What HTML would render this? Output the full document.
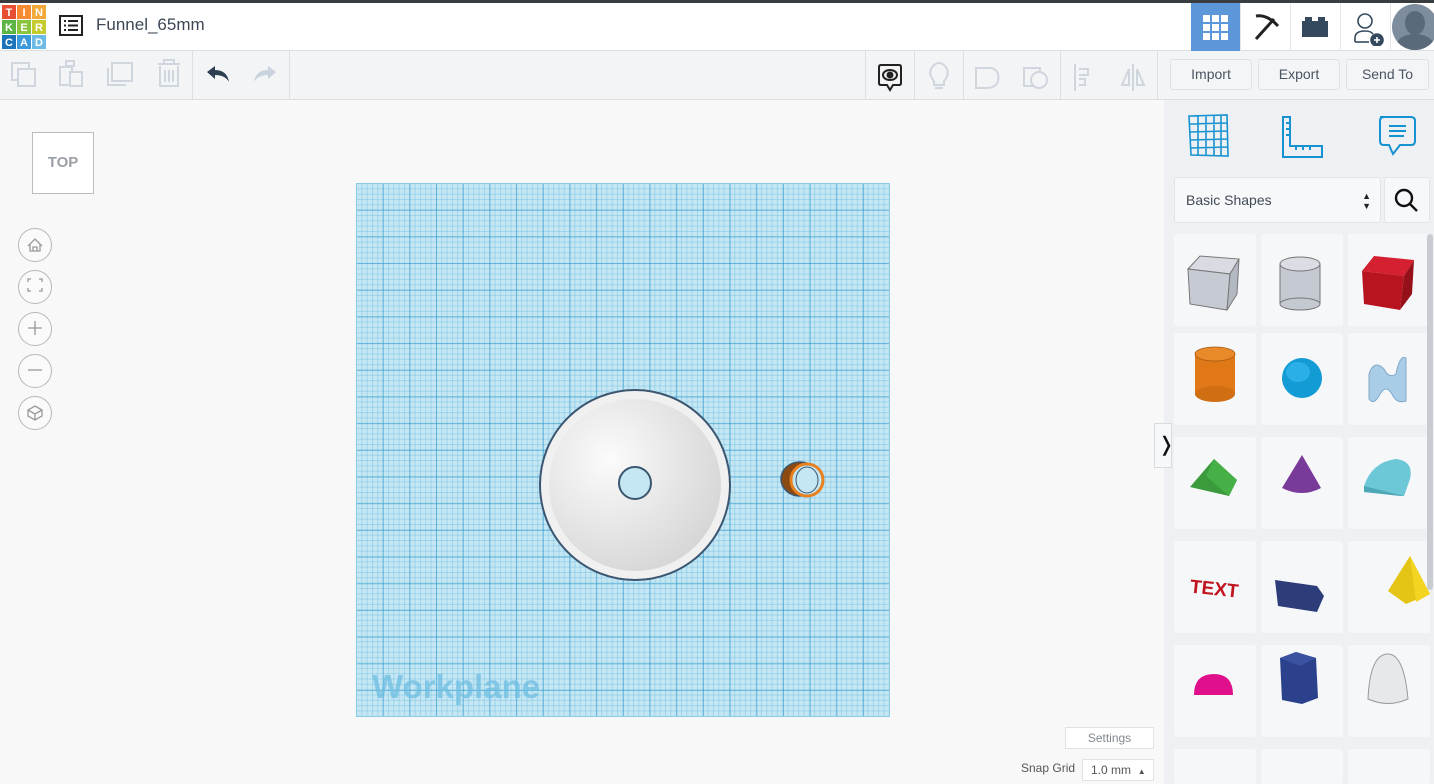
<!DOCTYPE html>
<html style="overflow:hidden;height:784px"><head><meta charset="utf-8"><style>
*{box-sizing:border-box;margin:0;padding:0}
body{width:1434px;height:784px;overflow:hidden;background:#f8f8f8;font-family:"Liberation Sans",sans-serif;position:relative}
.a{position:absolute}
.card{position:absolute;width:82px;height:92px;background:#f6f7f9;border-radius:3px}
.btn{position:absolute;height:31px;top:59px;border:1px solid #dfe1e5;border-radius:3px;background:#f4f5f7;color:#4a5562;font-size:14px;text-align:center;line-height:29px}
.nav{position:absolute;left:18px;width:34px;height:34px;border:1px solid #b5b8bc;border-radius:50%;background:#fafafa}
.sep{position:absolute;top:51px;width:1px;height:48px;background:#dde0e3}
</style></head><body>
<div class="a" style="left:0;top:0;width:1434px;height:3px;background:#3a3d40"></div>
<div class="a" style="left:0;top:3px;width:1434px;height:48px;background:#fff;border-bottom:1px solid #dcdfe2"></div>
<svg class="a" style="left:2px;top:5px" width="44" height="44" viewBox="0 0 44 44" font-family="Liberation Sans" font-weight="bold" font-size="11" fill="#fff" text-anchor="middle">
<rect x="0" y="0" width="14" height="14" fill="#e84e32"/><rect x="15" y="0" width="14" height="14" fill="#f58a32"/><rect x="30" y="0" width="14" height="14" fill="#f2a93a"/>
<rect x="0" y="15" width="14" height="14" fill="#5bb443"/><rect x="15" y="15" width="14" height="14" fill="#8ac43f"/><rect x="30" y="15" width="14" height="14" fill="#c4cc2e"/>
<rect x="0" y="30" width="14" height="14" fill="#1b74bb"/><rect x="15" y="30" width="14" height="14" fill="#3a9ad9"/><rect x="30" y="30" width="14" height="14" fill="#6cbbe6"/>
<text x="7" y="11">T</text><text x="22" y="11">I</text><text x="37" y="11">N</text><text x="7" y="26">K</text><text x="22" y="26">E</text><text x="37" y="26">R</text><text x="7" y="41">C</text><text x="22" y="41">A</text><text x="37" y="41">D</text>
</svg>
<svg class="a" style="left:59px;top:15px" width="24" height="21" viewBox="0 0 24 21"><rect x="1" y="1" width="22" height="19" fill="none" stroke="#222" stroke-width="2"/><g fill="#222"><rect x="5" y="5" width="2" height="2"/><rect x="9" y="5" width="10" height="2"/><rect x="5" y="9.5" width="2" height="2"/><rect x="9" y="9.5" width="10" height="2"/><rect x="5" y="14" width="2" height="2"/><rect x="9" y="14" width="10" height="2"/></g></svg>
<div class="a" style="left:96px;top:15px;font-size:17px;color:#3b4754">Funnel_65mm</div>
<div class="a" style="left:1191px;top:3px;width:49px;height:48px;background:#5b97d9"></div>
<svg class="a" style="left:1203px;top:15px" width="25" height="25"><g fill="#fff"><rect x="0" y="0" width="7" height="7"/><rect x="9" y="0" width="7" height="7"/><rect x="18" y="0" width="7" height="7"/><rect x="0" y="9" width="7" height="7"/><rect x="9" y="9" width="7" height="7"/><rect x="18" y="9" width="7" height="7"/><rect x="0" y="18" width="7" height="7"/><rect x="9" y="18" width="7" height="7"/><rect x="18" y="18" width="7" height="7"/></g></svg>
<div class="a" style="left:1240px;top:3px;width:1px;height:48px;background:#e4e6e8"></div>
<svg class="a" style="left:1251px;top:12px" width="30" height="30" viewBox="0 0 30 30" fill="none" stroke="#222" stroke-width="3"><path d="M5 4 Q16 2 27 14"/><path d="M23 7 L5 27"/></svg>
<div class="a" style="left:1290px;top:3px;width:1px;height:48px;background:#e4e6e8"></div>
<svg class="a" style="left:1302px;top:16px" width="26" height="22"><rect x="0" y="5" width="26" height="16" fill="#34495e"/><rect x="3" y="1" width="7" height="5" fill="#34495e"/><rect x="16" y="1" width="7" height="5" fill="#34495e"/></svg>
<div class="a" style="left:1340px;top:3px;width:1px;height:48px;background:#e4e6e8"></div>
<svg class="a" style="left:1354px;top:12px" width="32" height="34" viewBox="0 0 32 34" fill="none" stroke="#34495e" stroke-width="1.6"><circle cx="11" cy="9" r="7"/><path d="M1 30 V26 Q1 19 11 19 Q17 19 19 22"/><path d="M1 30 H15"/><circle cx="23" cy="28" r="6" fill="#34495e"/><path d="M23 25 V31 M20 28 H26" stroke="#fff"/></svg>
<div class="a" style="left:1390px;top:3px;width:1px;height:48px;background:#e4e6e8"></div>
<div class="a" style="left:1392px;top:4px;width:42px;height:46px;overflow:hidden"><div class="a" style="left:0;top:0;width:46px;height:46px;border-radius:50%;background:#7d8d9d;overflow:hidden"><div class="a" style="left:13px;top:7px;width:20px;height:24px;border-radius:50%;background:#5a6a7b"></div><div class="a" style="left:4px;top:30px;width:38px;height:24px;border-radius:50%;background:#5a6a7b"></div></div></div>
<div class="a" style="left:0;top:51px;width:1434px;height:49px;background:#f3f4f6;border-bottom:1px solid #dcdfe2"></div>
<svg class="a" style="left:0;top:51px" width="300" height="48" fill="none" stroke="#cfd6dd" stroke-width="2">
<rect x="12" y="12" width="17" height="17"/><rect x="18" y="18" width="17" height="17" fill="#f3f4f6"/>
<rect x="60" y="16" width="12" height="18"/><rect x="66" y="10" width="8" height="5"/><rect x="70" y="21" width="12" height="14" fill="#f3f4f6"/>
<rect x="112" y="12" width="20" height="18"/><path d="M108 17 V34 H126"/>
<path d="M158 13 H180 M164 13 V9 H174 V13 M160 15 V35 H178 V15 M165 19 V31 M169 19 V31 M173 19 V31"/>
</svg>
<div class="sep" style="left:192px"></div>
<svg class="a" style="left:205px;top:64px" width="26" height="20"><path d="M2 8 L10 2 V6 Q22 6 24 18 Q20 11 10 11 V15 Z" fill="#2c3e50"/></svg>
<svg class="a" style="left:252px;top:64px" width="26" height="20"><path d="M24 8 L16 2 V6 Q4 6 2 18 Q6 11 16 11 V15 Z" fill="#c8d3de"/></svg>
<div class="sep" style="left:289px"></div>
<div class="sep" style="left:865px"></div>
<svg class="a" style="left:877px;top:63px" width="26" height="30" viewBox="0 0 26 30" fill="none" stroke="#222" stroke-width="2"><path d="M4 2 H22 Q24 2 24 4 V20 Q24 22 22 22 H16 L13 27 L10 22 H4 Q2 22 2 20 V4 Q2 2 4 2Z"/><ellipse cx="13" cy="12" rx="7" ry="5"/><circle cx="13" cy="12" r="2.5" fill="#222"/></svg>
<div class="sep" style="left:914px"></div>
<svg class="a" style="left:926px;top:61px" width="230" height="32" fill="none" stroke="#cfd6dd" stroke-width="2">
<path d="M8 20 Q1 12 7 5 Q13 -1 19 5 Q25 12 18 20 V24 H8Z M9 27 H17"/>
<path d="M50 7 H66 Q74 10 72 20 Q70 27 60 27 H50Z"/>
<rect x="98" y="7" width="16" height="18"/><circle cx="113" cy="19" r="8" fill="#f3f4f6"/>
<path d="M149 3 V30 M153 8 H162 V14 H153 M153 18 H159 V24 H153"/>
<path d="M207 3 V30 M203 8 L196 24 H203Z M211 8 L218 24 H211Z"/>
</svg>
<div class="sep" style="left:963px"></div><div class="sep" style="left:1060px"></div><div class="sep" style="left:1157px"></div>
<div class="btn" style="left:1170px;width:82px">Import</div>
<div class="btn" style="left:1258px;width:82px">Export</div>
<div class="btn" style="left:1346px;width:83px">Send To</div>
<div class="a" style="left:32px;top:132px;width:62px;height:62px;border:1px solid #b9bcc0;background:#fff;color:#9aa0a6;font-size:15px;font-weight:bold;text-align:center;line-height:60px">TOP</div>
<div class="nav" style="top:228px"></div><div class="nav" style="top:270px"></div><div class="nav" style="top:312px"></div><div class="nav" style="top:354px"></div><div class="nav" style="top:396px"></div>
<svg class="a" style="left:18px;top:228px" width="34" height="204" fill="none" stroke="#999" stroke-width="1.3">
<path d="M10 18 L17 11 L24 18 M12 16 V23 H22 V16 M15 23 V19 H19 V23"/>
<path d="M10 54 V51 H13 M21 51 H24 V54 M24 60 V63 H21 M13 63 H10 V60"/>
<path d="M17 93 V107 M10 100 H24"/>
<path d="M10 142 H24"/>
<path d="M17 178 L24 182 V188 L17 192 L10 188 V182Z M10 182 L17 186 L24 182 M17 186 V192"/>
</svg>
<div class="a" style="left:356px;top:183px;width:534px;height:534px;background-color:#c5e6f3;border:1px solid #8ccbe4;
background-image:linear-gradient(90deg,rgba(40,150,200,.55) 1px,transparent 1px),linear-gradient(rgba(40,150,200,.55) 1px,transparent 1px),linear-gradient(90deg,rgba(90,180,220,.35) 1px,transparent 1px),linear-gradient(rgba(90,180,220,.35) 1px,transparent 1px);
background-size:26.7px 26.7px,26.7px 26.7px,5.34px 5.34px,5.34px 5.34px;background-position:-1px -1px"></div>
<div class="a" style="left:372px;top:668px;font-size:33px;font-weight:bold;color:rgba(110,190,225,.75)">Workplane</div>
<svg class="a" style="left:530px;top:380px" width="310" height="210" viewBox="530 380 310 210">
<defs><radialGradient id="g" cx="0.35" cy="0.35" r="0.75"><stop offset="0" stop-color="#fbfbfb"/><stop offset="1" stop-color="#d4d4d4"/></radialGradient></defs>
<circle cx="635" cy="485" r="95" fill="#f0f0f0" stroke="#3a5670" stroke-width="2"/>
<circle cx="635" cy="485" r="86" fill="url(#g)"/>
<circle cx="635" cy="483" r="16" fill="#c5e6f3" stroke="#3a5670" stroke-width="2"/>
<ellipse cx="800" cy="479" rx="19" ry="17" fill="#8a4a12" stroke="#3a5670" stroke-width="1.5"/>
<ellipse cx="807" cy="480" rx="16" ry="16" fill="#c5e6f3" stroke="#e8801e" stroke-width="3"/>
<ellipse cx="807" cy="480" rx="11" ry="13" fill="none" stroke="#3a5670" stroke-width="1"/>
</svg>
<div class="a" style="left:1065px;top:727px;width:89px;height:22px;border:1px solid #e0e2e5;background:#fff;color:#7f8890;font-size:12px;text-align:center;line-height:20px">Settings</div>
<div class="a" style="left:1021px;top:761px;font-size:12px;color:#555">Snap Grid</div>
<div class="a" style="left:1082px;top:759px;width:72px;height:22px;border:1px solid #e0e2e5;background:#fff;color:#555;font-size:12px;line-height:20px;padding-left:8px">1.0 mm &nbsp;<span style="font-size:8px">▲</span></div>
<div class="a" style="left:1164px;top:100px;width:270px;height:684px;background:#eff0f3"></div>
<div class="a" style="left:1154px;top:423px;width:18px;height:45px;background:#f7f8fa;border:1px solid #d8dbe0;font-size:20px;line-height:42px;padding-left:3px;color:#111">❭</div>
<svg class="a" style="left:1186px;top:113px" width="246" height="48" fill="none" stroke="#1593d0" stroke-width="2">
<path d="M3 3 L41 2 L42 43 L5 42Z M3 11 L41 10 M4 19 L41 18 M4 27 L42 26 M4 35 L42 34 M12 3 V42 M20 3 V42 M28 3 V42 M35 3 V42" stroke-width="1.6"/>
<path d="M97 4 H104 V33 H136 V44 H97Z M104 10 H100 M104 16 H100 M104 22 H100 M110 33 V37 M117 33 V37 M124 33 V37"/>
<path d="M194 4 H225 Q229 4 229 8 V28 Q229 32 225 32 H214 L207 41 L203 32 H198 Q194 32 194 28 V8 Q194 4 198 4Z M203 13 H220 M203 18 H220 M203 23 H218"/>
</svg>
<div class="a" style="left:1174px;top:177px;width:207px;height:46px;background:#f7f8fa;border:1px solid #e2e4e8;border-radius:3px;font-size:14px;color:#414b55;line-height:44px;padding-left:11px">Basic Shapes<span style="position:absolute;right:9px;top:0;font-size:9px;line-height:10px;padding-top:13px;color:#222">▲<br>▼</span></div>
<div class="a" style="left:1384px;top:177px;width:46px;height:46px;background:#f7f8fa;border:1px solid #e2e4e8;border-radius:3px"></div>
<svg class="a" style="left:1394px;top:188px" width="26" height="26" fill="none" stroke="#111" stroke-width="2.4"><circle cx="10" cy="10" r="8"/><path d="M16 16 L23 23"/></svg>
<div class="card" style="left:1174px;top:234px"></div><div class="card" style="left:1261px;top:234px"></div><div class="card" style="left:1348px;top:234px"></div>
<div class="card" style="left:1174px;top:333px"></div><div class="card" style="left:1261px;top:333px"></div><div class="card" style="left:1348px;top:333px"></div>
<div class="card" style="left:1174px;top:437px"></div><div class="card" style="left:1261px;top:437px"></div><div class="card" style="left:1348px;top:437px"></div>
<div class="card" style="left:1174px;top:541px"></div><div class="card" style="left:1261px;top:541px"></div><div class="card" style="left:1348px;top:541px"></div>
<div class="card" style="left:1174px;top:645px"></div><div class="card" style="left:1261px;top:645px"></div><div class="card" style="left:1348px;top:645px"></div>
<div class="card" style="left:1174px;top:749px;height:35px"></div><div class="card" style="left:1261px;top:749px;height:35px"></div><div class="card" style="left:1348px;top:749px;height:35px"></div>
<div class="a" style="left:1427px;top:234px;width:6px;height:356px;background:#c8cbcf;border-radius:3px"></div>
<svg class="a" style="left:1174px;top:234px" width="260" height="550">
<path d="M14 35 L26 22 L65 25 L56 40Z" fill="#d8dbe2" stroke="#777"/><path d="M14 35 L56 40 L53 76 L16 70Z" fill="#c6cad3" stroke="#777"/><path d="M56 40 L65 25 L63 60 L53 76Z" fill="#b3b8c2" stroke="#777"/>
<rect x="106" y="30" width="40" height="40" fill="#c5c9d1"/><ellipse cx="126" cy="70" rx="20" ry="6" fill="#c5c9d1" stroke="#777"/><ellipse cx="126" cy="30" rx="20" ry="7" fill="#dadde3" stroke="#777"/><path d="M106 30 V70 M146 30 V70" stroke="#777"/>
<path d="M188 37 L200 22 L240 26 L230 42Z" fill="#d42030"/><path d="M188 37 L230 42 L226 76 L190 70Z" fill="#b8141f"/><path d="M230 42 L240 26 L238 60 L226 76Z" fill="#961019"/>
<rect x="21" y="120" width="40" height="40" fill="#e07818"/><ellipse cx="41" cy="160" rx="20" ry="8" fill="#d06e14"/><ellipse cx="41" cy="120" rx="20" ry="7" fill="#e88a2a" stroke="#a85a10" stroke-width=".8"/>
<circle cx="128" cy="144" r="20" fill="#129bd4"/><ellipse cx="124" cy="138" rx="12" ry="10" fill="#2ab0e6"/>
<path d="M195 140 Q200 125 210 135 Q215 145 222 140 Q226 120 232 124 L232 167 Q222 170 218 160 Q212 150 206 160 Q200 172 195 165Z" fill="#a9cde6" stroke="#7fa9c8"/>
<path d="M16 253 L40 225 L63 246 L55 262Z" fill="#3b9a3b"/><path d="M40 225 L63 246 L55 262 L32 242Z" fill="#46b046"/>
<path d="M128 221 L147 254 Q128 264 108 254Z" fill="#7a3a9a"/>
<path d="M190 252 Q198 228 222 225 Q240 227 236 245 L230 262 L190 258Z" fill="#6cc7d6"/><path d="M190 252 L230 262 L226 262 L190 258Z" fill="#4ea7b6"/>
<text x="16" y="361" font-family="Liberation Sans" font-weight="bold" font-size="19" fill="#c0141e" transform="rotate(6 40 355)">TEXT</text>
<path d="M101 346 L143 352 L150 362 L143 378 L104 372Z" fill="#2c3d7a"/>
<path d="M236 322 L256 360 L232 370 L214 357Z" fill="#e4c414"/><path d="M236 322 L242 368 L256 360Z" fill="#f3d420"/>
<path d="M20 461 Q20 440 40 440 Q59 440 59 461Z" fill="#e0108c"/>
<path d="M106 424 L122 418 L142 424 L144 464 L128 470 L108 466Z" fill="#2c418c"/><path d="M106 424 L122 418 L142 424 L126 432Z" fill="#3a52a0"/>
<path d="M194 465 Q196 420 214 420 Q230 420 234 465 Q214 474 194 465Z" fill="#e6e8ea" stroke="#999"/>
</svg>
</body></html>
